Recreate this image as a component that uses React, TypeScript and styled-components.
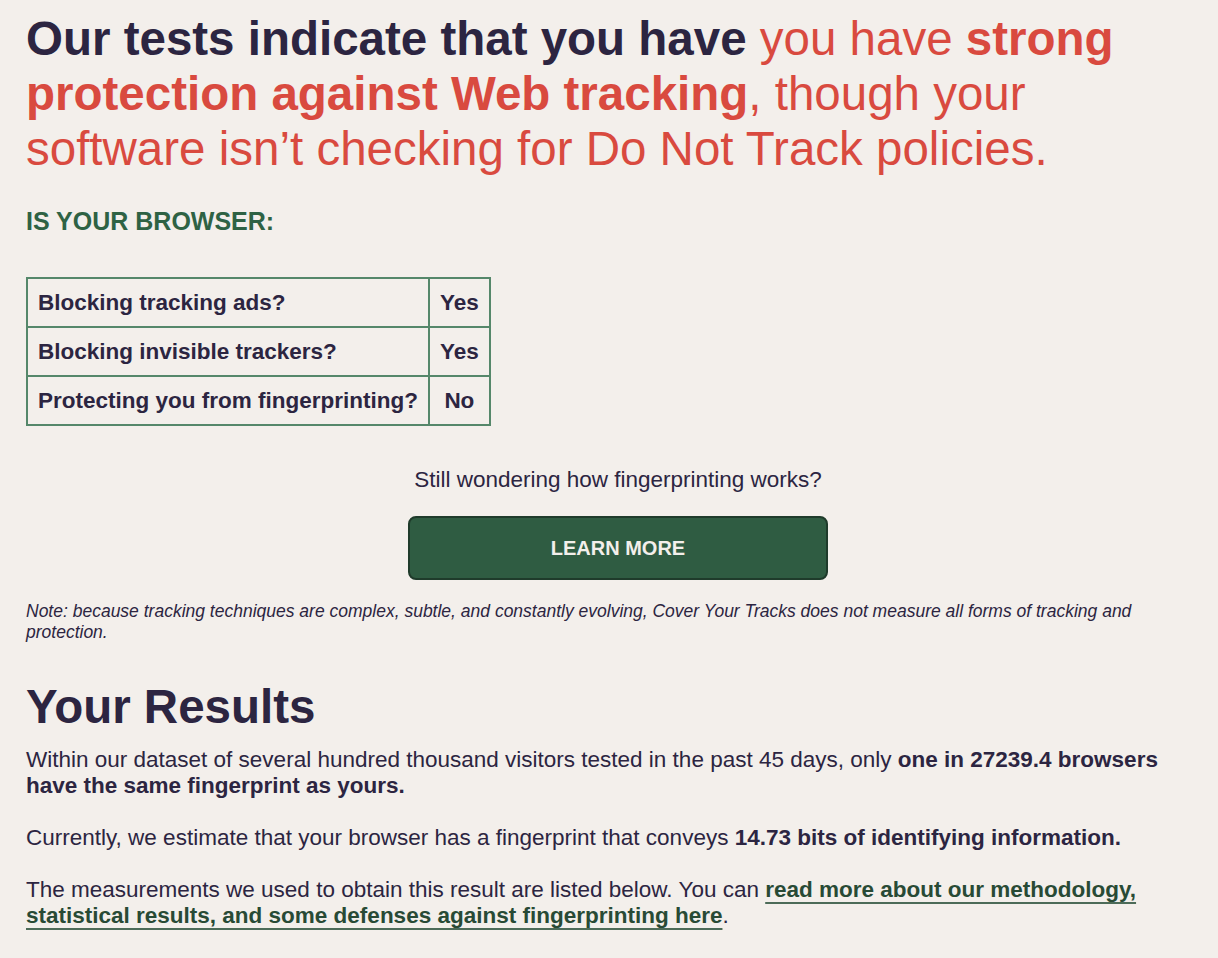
import React from "react";
import styled, { createGlobalStyle } from "styled-components";

const Global = createGlobalStyle`
  html, body { margin: 0; padding: 0; background: #f3efeb; }
  body { font-family: "Liberation Sans", Arial, sans-serif; color: #2c2541; }
`;

const Page = styled.main`
  padding: 11px 8px 40px 26px;
  max-width: 1184px;
`;

const Headline = styled.h1`
  margin: 0;
  font-size: 47.5px;
  line-height: 55px;
  font-weight: 700;
  color: #2c2541;
`;

const Red = styled.span<{ $bold?: boolean }>`
  color: #d94a3f;
  font-weight: ${(p) => (p.$bold ? 700 : 400)};
`;

const Kicker = styled.h2`
  margin: 31px 0 0;
  font-size: 25px;
  line-height: 28px;
  font-weight: 700;
  color: #2e6244;
  text-transform: uppercase;
`;

const Table = styled.table`
  margin-top: 42px;
  border-collapse: collapse;
  border: 2px solid #55876a;
`;

const Cell = styled.td<{ $center?: boolean }>`
  border: 2px solid #55876a;
  padding: 0 10px;
  height: 47px;
  font-size: 22.5px;
  font-weight: 700;
  color: #2c2541;
  text-align: ${(p) => (p.$center ? "center" : "left")};
  white-space: nowrap;
`;

const Prompt = styled.section`
  display: flex;
  flex-direction: column;
  align-items: center;
  margin-top: 40px;
`;

const PromptText = styled.p`
  margin: 0;
  font-size: 22.5px;
  line-height: 28px;
`;

const LearnButton = styled.button`
  margin-top: 22px;
  width: 420px;
  height: 64px;
  border-radius: 8px;
  border: 2px solid #1f3b2b;
  background: #2f5c42;
  color: #f3efeb;
  font-family: "Liberation Sans", Arial, sans-serif;
  font-size: 20px;
  font-weight: 700;
  text-transform: uppercase;
  cursor: pointer;
`;

const Note = styled.p`
  margin: 21px 0 0;
  font-size: 17.5px;
  line-height: 21px;
  font-style: italic;
  color: #2c2541;
`;

const ResultsTitle = styled.h2`
  margin: 36px 0 0;
  font-size: 47.5px;
  line-height: 55px;
  font-weight: 700;
  color: #2c2541;
`;

const Body = styled.section`
  margin-top: 13px;
  display: flex;
  flex-direction: column;
  gap: 26px;
`;

const Para = styled.p`
  margin: 0;
  font-size: 22.5px;
  line-height: 26px;
`;

const Link = styled.a`
  color: #284a35;
  font-weight: 700;
  text-decoration: underline;
  text-decoration-color: #4c6b58;
  text-decoration-thickness: 2px;
  text-underline-offset: 5px;
`;

const rows: [string, string][] = [
  ["Blocking tracking ads?", "Yes"],
  ["Blocking invisible trackers?", "Yes"],
  ["Protecting you from fingerprinting?", "No"],
];

export default function App() {
  return (
    <>
      <Global />
      <Page>
        <Headline>
          Our tests indicate that you have <Red>you have </Red>
          <Red $bold>strong protection against Web tracking</Red>
          <Red>, though your software isn’t checking for Do Not Track policies.</Red>
        </Headline>
        <Kicker>Is your browser:</Kicker>
        <Table>
          <tbody>
            {rows.map(([q, a]) => (
              <tr key={q}>
                <Cell>{q}</Cell>
                <Cell $center>{a}</Cell>
              </tr>
            ))}
          </tbody>
        </Table>
        <Prompt>
          <PromptText>Still wondering how fingerprinting works?</PromptText>
          <LearnButton>Learn more</LearnButton>
        </Prompt>
        <Note>
          Note: because tracking techniques are complex, subtle, and constantly evolving, Cover Your Tracks does not measure all forms of tracking and protection.
        </Note>
        <ResultsTitle>Your Results</ResultsTitle>
        <Body>
          <Para>
            Within our dataset of several hundred thousand visitors tested in the past 45 days, only{" "}
            <strong>one in 27239.4 browsers have the same fingerprint as yours.</strong>
          </Para>
          <Para>
            Currently, we estimate that your browser has a fingerprint that conveys{" "}
            <strong>14.73 bits of identifying information.</strong>
          </Para>
          <Para>
            The measurements we used to obtain this result are listed below. You can{" "}
            <Link href="#">read more about our methodology, statistical results, and some defenses against fingerprinting here</Link>.
          </Para>
        </Body>
      </Page>
    </>
  );
}
